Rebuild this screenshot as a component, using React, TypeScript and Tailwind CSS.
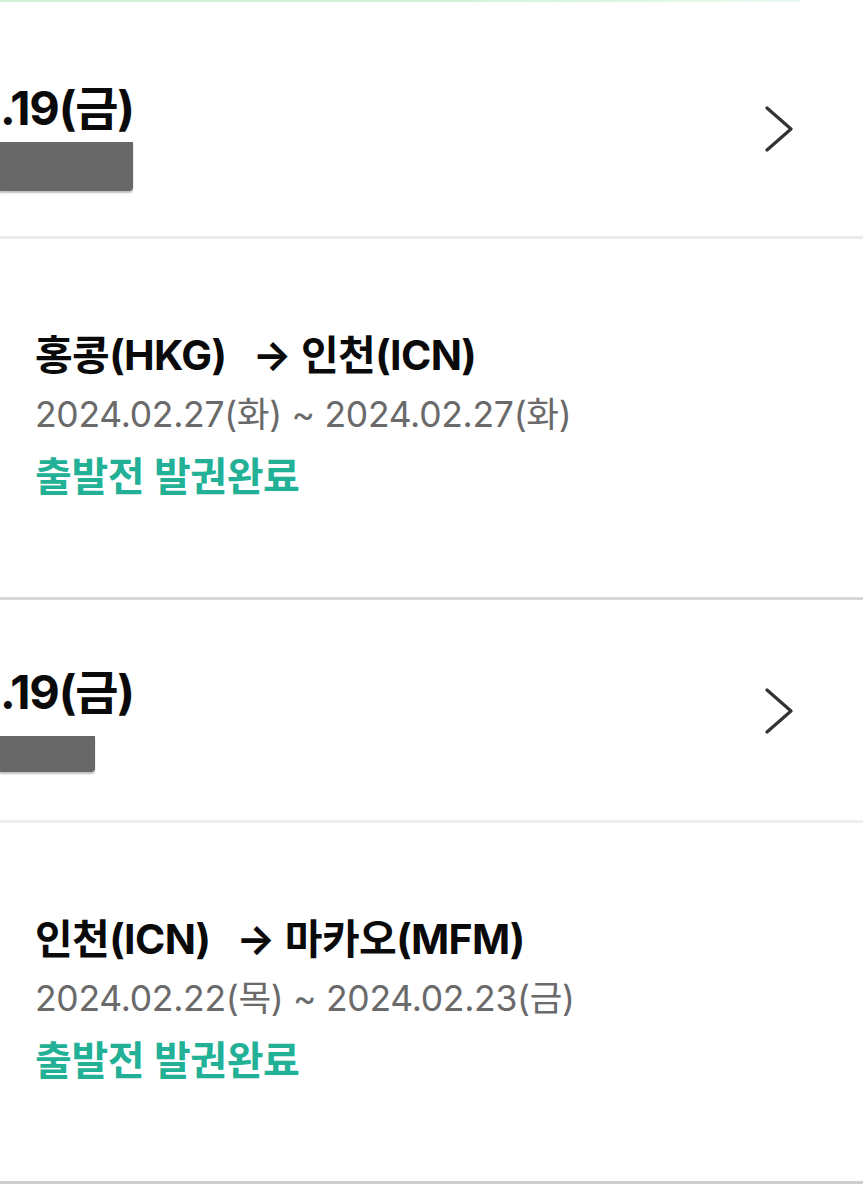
import React from "react";

const font = { fontFamily: '"Inter", "Noto Sans CJK KR", sans-serif' };

function Chevron() {
  return (
    <svg width="30" height="46" viewBox="0 0 30 46" fill="none" className="shrink-0">
      <path d="M3 2 L27 23 L3 44" stroke="#333333" strokeWidth="3.2" strokeLinecap="round" strokeLinejoin="round" />
    </svg>
  );
}

function Header({ date, barW, barH, h, pt, gap, chevTop }: { date: string; barW: number; barH: number; h: string; pt: string; gap: string; chevTop: string }) {
  return (
    <div className={`flex justify-between ${h} ${pt}`}>
      <div className="flex flex-col">
        <div className="w-[134px] flex">
          <span className="whitespace-nowrap text-[47px] leading-[48px] font-bold text-[#0a0a0a] tracking-[-1.2px]">{date}</span>
        </div>
        <div
          className={`${gap} bg-[#686868] rounded-br-[4px] shadow-[0_2px_2px_rgba(0,0,0,0.25)]`}
          style={{ width: barW, height: barH }}
        />
      </div>
      <div className={`mr-[69px] ${chevTop}`}>
        <Chevron />
      </div>
    </div>
  );
}

function Card({ from, to, range }: { from: string; to: string; range: string }) {
  return (
    <div className="h-[358px] pl-[35px] pt-[86px] bg-white">
      <div className="text-[41px] leading-[60px] font-bold text-[#0a0a0a] whitespace-nowrap tracking-[-0.6px]">
        {from}
        <span className="ml-[26px] mr-[10px]">→</span>
        {to}
      </div>
      <div className="text-[35.5px] leading-[60px] text-[#6a6a6a] whitespace-nowrap tracking-[-0.3px]">{range}</div>
      <div className="text-[40px] leading-[64px] font-semibold text-[#22b096] whitespace-nowrap tracking-[-0.4px]">출발전 발권완료</div>
    </div>
  );
}

export default function App() {
  return (
    <div className="w-[863px] min-h-[1200px] bg-white overflow-hidden" style={font}>
      <div className="h-[2px] w-[800px] bg-gradient-to-r from-[#cdf2d7] via-[#cdf2d7] to-[#eaf9ee]" />
      <Header date=".19(금)" barW={133} barH={49} h="h-[234px]" pt="pt-[82px]" gap="mt-[10px]" chevTop="mt-[22px]" />
      <div className="h-[3px] bg-[#ebebeb]" />
      <Card from="홍콩(HKG)" to="인천(ICN)" range="2024.02.27(화) ~ 2024.02.27(화)" />
      <div className="h-[3px] bg-[#d6d6d6]" />
      <Header date=".19(금)" barW={95} barH={36} h="h-[220px]" pt="pt-[68px]" gap="mt-[20px]" chevTop="mt-[20px]" />
      <div className="h-[3px] bg-[#eeeeee]" />
      <Card from="인천(ICN)" to="마카오(MFM)" range="2024.02.22(목) ~ 2024.02.23(금)" />
      <div className="h-[3px] bg-[#cfcfcf]" />
    </div>
  );
}
